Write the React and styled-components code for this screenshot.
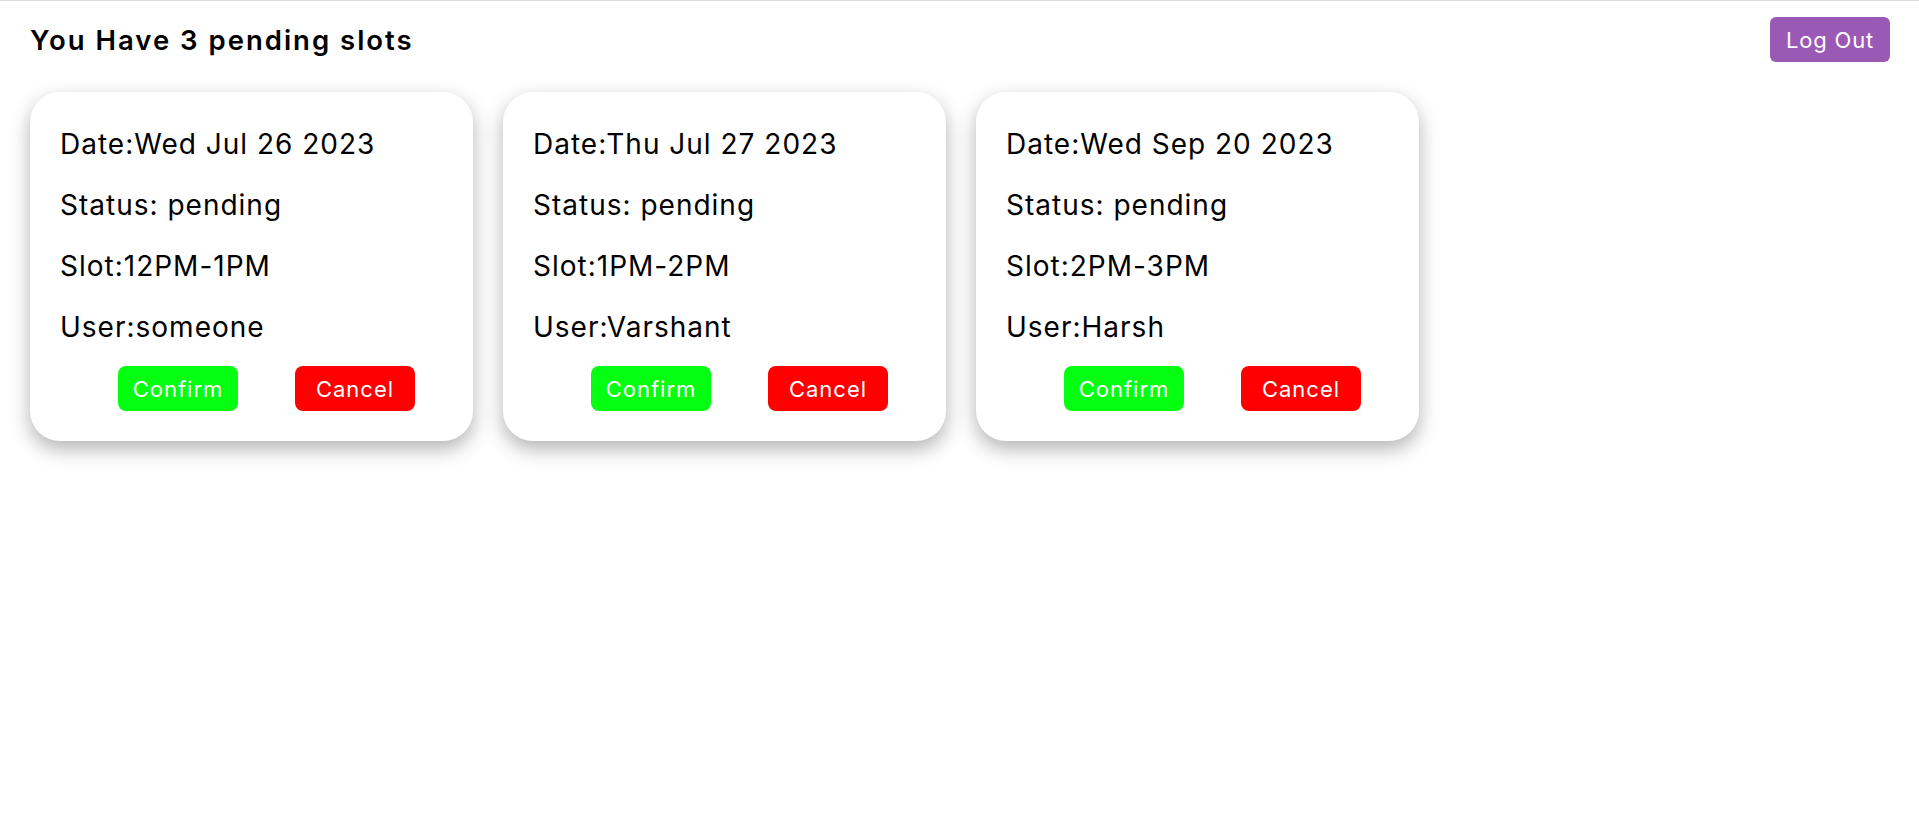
import React from "react";
import styled, { createGlobalStyle } from "styled-components";

const slots = [
    { id: 1, date: "Wed Jul 26 2023", status: "pending", slot: "12PM-1PM", user: "someone" },
    { id: 2, date: "Thu Jul 27 2023", status: "pending", slot: "1PM-2PM", user: "Varshant" },
    { id: 3, date: "Wed Sep 20 2023", status: "pending", slot: "2PM-3PM", user: "Harsh" },
];

export default function App() {
    const pending = slots.filter((s) => s.status === "pending");

    return (
        <>
            <GlobalStyle />
            <Page>
                <Header>
                    <Title>You Have {pending.length} pending slots</Title>
                    <LogOut>Log Out</LogOut>
                </Header>
                <CardList>
                    {pending.map((s) => (
                        <Card key={s.id}>
                            <Line>Date:{s.date}</Line>
                            <Line>Status: {s.status}</Line>
                            <Line>Slot:{s.slot}</Line>
                            <Line>User:{s.user}</Line>
                            <Actions>
                                <ActionBtn color="#04ff10">Confirm</ActionBtn>
                                <ActionBtn color="#ff0000">Cancel</ActionBtn>
                            </Actions>
                        </Card>
                    ))}
                </CardList>
            </Page>
        </>
    );
}

const GlobalStyle = createGlobalStyle`
    body {
        margin: 0;
        background: #fff;
        font-family: Inter, "Noto Sans", sans-serif;
        color: #000;
    }
`;

const Page = styled.div`
    border-top: 1px solid #dcdcdc;
    min-height: 830px;
`;

const Header = styled.header`
    display: flex;
    align-items: center;
    justify-content: space-between;
    padding: 16px 29px 0 30px;
`;

const Title = styled.h2`
    margin: 0;
    font-size: 27.5px;
    font-weight: 600;
    letter-spacing: 2px;
`;

const LogOut = styled.button`
    width: 120px;
    height: 45px;
    border: none;
    border-radius: 6px;
    background-color: #9b59b6;
    color: white;
    font-family: inherit;
    font-size: 22px;
    letter-spacing: 0.8px;
    cursor: pointer;
`;

const CardList = styled.div`
    display: flex;
    gap: 30px;
    padding: 30px 30px 0;
`;

const Card = styled.div`
    width: 443px;
    box-sizing: border-box;
    padding: 22px 30px 30px;
    border-radius: 30px;
    background: white;
    box-shadow: 0 8px 20px rgba(0, 0, 0, 0.3);
`;

const Line = styled.p`
    margin: 0;
    font-size: 28px;
    line-height: 61px;
    letter-spacing: 1px;
`;

const Actions = styled.div`
    display: flex;
    gap: 57px;
    margin-top: 8px;
    padding-left: 58px;
`;

const ActionBtn = styled.button`
    width: 120px;
    height: 45px;
    border: none;
    border-radius: 8px;
    background-color: ${({ color }) => color};
    color: white;
    font-family: inherit;
    font-size: 22px;
    letter-spacing: 1px;
    cursor: pointer;
`;
